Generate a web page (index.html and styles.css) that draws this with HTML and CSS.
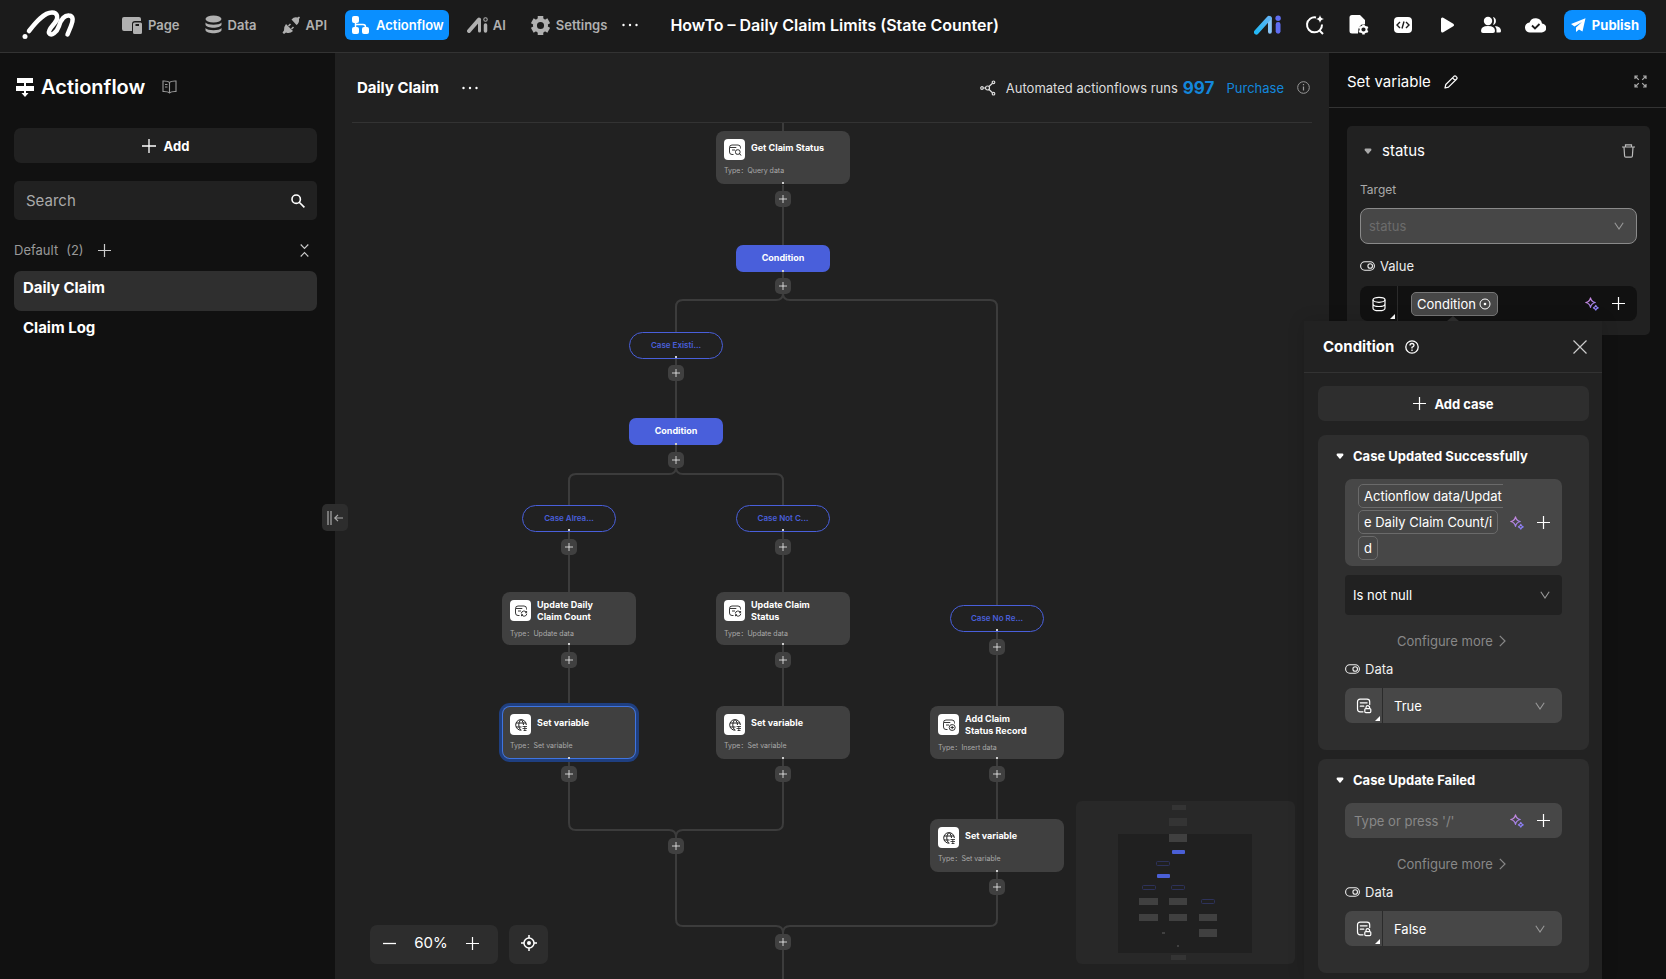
FILE: index.html
```html
<!DOCTYPE html>
<html lang="en">
<head>
    <meta charset="UTF-8">
    <meta name="viewport" content="width=device-width, initial-scale=1.0">
    <title>Actionflow - Daily Claim</title>
    <link rel="stylesheet" href="styles.css">
</head>
<body>
<!-- Shared icons -->
<svg class="sprite" aria-hidden="true">
    <defs>
        <linearGradient id="aiBlue" x1="0" y1="1" x2="1" y2="0">
            <stop offset="0" stop-color="#22b8f5"/>
            <stop offset="1" stop-color="#5fb4f5"/>
        </linearGradient>
        <linearGradient id="sparkGrad" x1="0" y1="0" x2="1" y2="1">
            <stop offset="0" stop-color="#d78ad8"/>
            <stop offset="1" stop-color="#7d7dfa"/>
        </linearGradient>
    </defs>
    <symbol id="plus" viewBox="0 0 14 14"><path d="M7 0v14M0 7h14" fill="none" stroke="currentColor" stroke-width="1.3"/></symbol>
    <symbol id="dots" viewBox="0 0 16 4"><circle cx="1.5" cy="2" r="1.2" fill="currentColor"/><circle cx="8" cy="2" r="1.2" fill="currentColor"/><circle cx="14.5" cy="2" r="1.2" fill="currentColor"/></symbol>
    <symbol id="chevron" viewBox="0 0 10 8"><path d="M.8.8 5 7 9.2.8" fill="none" stroke="currentColor" stroke-width="1.1"/></symbol>
    <symbol id="arrow" viewBox="0 0 7 12"><path d="M.8.8 6 6 .8 11.2" fill="none" stroke="currentColor" stroke-width="1.2"/></symbol>
    <symbol id="caret" viewBox="0 0 8 6"><path d="M1.5.5h5Q8 .8 7.2 2.2L4.6 5.4Q4 6 3.4 5.4L.8 2.2Q0 .8 1.5.5Z" fill="currentColor"/></symbol>
    <symbol id="toggle" viewBox="0 0 15 10"><rect x=".6" y=".8" width="13.8" height="8.4" rx="4.2" fill="none" stroke="currentColor" stroke-width="1.1"/><circle cx="10.2" cy="5" r="2.3" fill="none" stroke="currentColor" stroke-width="1.1"/></symbol>
    <symbol id="spark" viewBox="0 0 14 14"><path d="M5.5.8Q6.3 4.7 10.3 5.5 6.3 6.3 5.5 10.3 4.7 6.3.8 5.5 4.7 4.7 5.5.8ZM10.8 8.4Q11.2 10.3 13.2 10.8 11.2 11.3 10.8 13.2 10.3 11.3 8.4 10.8 10.3 10.3 10.8 8.4Z" fill="none" stroke="url(#sparkGrad)" stroke-width="1.2" stroke-linejoin="round"/></symbol>
    <symbol id="formlock" viewBox="0 0 16 16"><path d="M7 13.8H4.2Q1.5 13.8 1.5 11V3.8Q1.5 1.2 4.2 1.2H11Q13.7 1.2 13.7 3.8V6.5M4.3 4.8h6.8M4.3 8.2h3.5" fill="none" stroke="currentColor" stroke-width="1.2" stroke-linecap="round"/><rect x="8.8" y="10.6" width="6" height="4" rx="1" fill="none" stroke="currentColor" stroke-width="1.2"/><path d="M10 10.5V9.500a1.8 1.8 0 0 1 3.600 0v1" fill="none" stroke="currentColor" stroke-width="1.2"/></symbol>
    <symbol id="record" viewBox="0 0 14 14"><path d="M5.5 11.5H4Q1.5 11.5 1.5 9V4.5Q1.5 2 4 2H10Q12.5 2 12.5 4.5V5.500M1.800 4.500h6.500M4 7h3" fill="none" stroke="currentColor" stroke-width=".9"/></symbol>
    <symbol id="nodeQuery" viewBox="0 0 14 14"><use href="#record"/><rect x="7.5" y="6.8" width="4.500" height="4.500" rx="1.800" fill="none" stroke="currentColor"/><path d="m11.5 10.5 1.5 2" stroke="currentColor"/></symbol>
    <symbol id="nodeUpdate" viewBox="0 0 14 14"><use href="#record"/><path d="M7.300 9.500a2.700 2.700 0 0 1 5-1.200M12.600 7v1.700h-1.500M12.800 9.700a2.700 2.700 0 0 1-5 1.200M7.500 12.200v-1.600h1.400" fill="none" stroke="currentColor" stroke-width=".9"/></symbol>
    <symbol id="nodeInsert" viewBox="0 0 14 14"><use href="#record"/><circle cx="10.2" cy="9.5" r="3" fill="none" stroke="currentColor" stroke-width=".9"/><path d="M10.2 7.8v3.4M8.500 9.500h3.400" stroke="currentColor" stroke-width=".9"/></symbol>
    <symbol id="nodeVar" viewBox="0 0 14 14"><path d="M7.500 12.200A5.300 5.300 0 1 1 12.300 7M2 5h10M2 9h5.500M6.500 1.800Q3 7 6.500 12M7.500 1.800Q9.500 4.200 9.500 7" fill="none" stroke="currentColor"/><path d="M8.500 8.500h4.500M8.500 10.500h4.500M9.500 12.500h3M10.800 8v5" stroke="currentColor" stroke-width=".8"/></symbol>
    <symbol id="db" viewBox="0 0 16 16"><ellipse cx="8" cy="3.8" rx="6" ry="2.5" fill="none" stroke="currentColor" stroke-width="1.2"/><path d="M2 3.8v8.4c0 3.300 12 3.300 12 0V3.800M2 8c0 3.300 12 3.300 12 0" fill="none" stroke="currentColor" stroke-width="1.2"/></symbol>
</svg>

<header class="topbar">
    <a href="#" class="logo" aria-label="Home">
        <svg width="54" height="30" viewBox="0 0 54 30" fill="none" stroke="#fff" stroke-width="4.500" stroke-linecap="round" stroke-linejoin="round">
            <circle cx="3" cy="26.500" r="2.500" fill="#fff" stroke="none"/>
            <path d="M7 21C14 12 22 2.500 30 2.500 36 2.500 36 8 34 11 31 16 26 19 27 23 29 27 35 22 37 16 39 9 43 5 47 5.500 52 6 51 11 49 16L45.500 24.500"/>
        </svg>
    </a>
    <nav class="nav">
        <a href="#" class="nav-item">
            <svg width="20" height="20" viewBox="0 0 20 20" fill="currentColor"><path d="M2 2h15q2 0 2 2v2h-6q-3 0-3 3v7H2q-2 0-2-2V4q0-2 2-2Z"/><path fill-rule="evenodd" d="M12.500 7.500h6Q20 7.500 20 9v8.500q0 1.500-1.500 1.500h-6q-1.500 0-1.500-1.500V9q0-1.500 1.500-1.500ZM13.500 9v2h3.500V9Z"/></svg>
            <span>Page</span>
        </a>
        <a href="#" class="nav-item">
            <svg width="17" height="20" viewBox="0 0 17 20" fill="currentColor"><ellipse cx="8.500" cy="4" rx="8" ry="3.500"/><path d="M.5 7.500c2 3 14 3 16 0v2.300c-1 4-15 4-16 0ZM.5 13c2 3 14 3 16 0v2.300c-1 4-15 4-16 0Z"/></svg>
            <span>Data</span>
        </a>
        <a href="#" class="nav-item">
            <svg width="18" height="20" viewBox="0 0 18 20" fill="currentColor"><path d="m9.500 4.500 5 5.500q3-2 2.500-6l1-1.500-1-1-1.500 1Q12 1.500 9.500 4.500ZM4 9l7 7q-3 3-7 1.500L2 19l-1.500-1.500L2 15.500Q1.500 12 4 9Z"/><path d="m6.500 11 2-2M9.500 14l2-2" stroke="currentColor" stroke-width="1.500"/></svg>
            <span>API</span>
        </a>
        <a href="#" class="nav-item active">
            <svg width="17" height="18" viewBox="0 0 17 18" fill="currentColor"><rect x="0" y="0" width="7" height="7" rx="2"/><rect x="0" y="11" width="7" height="7" rx="2"/><rect x="10" y="11" width="7" height="7" rx="2"/><path d="M3.500 4v10M3.500 8.500H11q2.500 0 2.500 2.500V14" fill="none" stroke="currentColor" stroke-width="1.500"/></svg>
            <span>Actionflow</span>
        </a>
        <a href="#" class="nav-item tight">
            <svg width="21" height="16" viewBox="0 0 21 16" fill="none" stroke="currentColor" stroke-linecap="round"><path d="M2 14 12 2.500" stroke-width="4"/><path d="M12.500 3v11" stroke-width="3"/><path d="M18.500 8v6" stroke-width="3.500"/><circle cx="18.500" cy="2.500" r=".5" stroke-width="3.500"/></svg>
            <span>AI</span>
        </a>
        <a href="#" class="nav-item">
            <svg width="19" height="19" viewBox="0 0 24 24" fill="none" stroke="currentColor"><circle cx="12" cy="12" r="7" stroke-width="5"/><path d="M12 0v4M12 20v4M1.600 6l3.500 2M18.900 16l3.500 2M1.600 18l3.500-2M18.900 8l3.500-2" stroke-width="7"/></svg>
            <span>Settings</span>
        </a>
    </nav>
    <button class="icon-btn nav-more" aria-label="More"><svg width="18" height="4"><use href="#dots"/></svg></button>
    <h1 class="project">HowTo – Daily Claim Limits (State Counter)</h1>
    <div class="tools">
        <button class="icon-btn" aria-label="AI assistant">
            <svg width="27" height="20" viewBox="0 0 28 20" fill="none" stroke-linecap="round"><path d="M16.500 3v14" stroke="#8bc5f5" stroke-width="4"/><path d="M2.500 17.500 15.500 3" stroke="url(#aiBlue)" stroke-width="5"/><path d="M25 9.500v7" stroke="#5f6df2" stroke-width="5"/><circle cx="25" cy="3" r="2.800" fill="#5f6df2"/></svg>
        </button>
        <button class="icon-btn" aria-label="AI search">
            <svg width="20" height="20" viewBox="0 0 20 20" fill="none" stroke="#fff" stroke-width="2"><path d="M11 2.500A7.500 7.500 0 1 0 17 9.500M14 15l4 4"/><path d="M15 0q.5 3.500 4 4-3.500.5-4 4-.5-3.500-4-4 3.500-.5 4-4Z" fill="#fff" stroke="none"/></svg>
        </button>
        <button class="icon-btn" aria-label="File settings">
            <svg width="20" height="20" viewBox="0 0 20 20"><path d="M3 0h8l5 5v4q-7.500 0-7 9.500H3q-2.500 0-2.500-2.500V2.500Q.5 0 3 0Z" fill="#fff"/><path d="M14.500 9.500v10M10.200 12l8.600 5M10.200 17l8.600-5" stroke="#fff" stroke-width="2.500"/><circle cx="14.500" cy="14.500" r="3" fill="#1b1b1b" stroke="#fff" stroke-width="1.800"/></svg>
        </button>
        <button class="icon-btn" aria-label="Code">
            <svg width="20" height="20" viewBox="0 0 20 20"><rect x="1" y="2" width="18" height="16" rx="4" fill="#fff"/><path d="m7 7-3 3 3 3M13 7l3 3-3 3M11 6.500l-2 7" fill="none" stroke="#1b1b1b" stroke-width="1.400"/></svg>
        </button>
        <button class="icon-btn" aria-label="Preview">
            <svg width="20" height="20" viewBox="0 0 20 20"><path d="M5.500 4v12l10-6Z" fill="#fff" stroke="#fff" stroke-width="3" stroke-linejoin="round"/></svg>
        </button>
        <button class="icon-btn" aria-label="Members">
            <svg width="20" height="20" viewBox="0 0 20 20" fill="#fff"><circle cx="7" cy="6" r="4.200"/><path d="M0 16q0-5 7-5t7 5q0 2-2 2H2q-2 0-2-2ZM12 2a4.200 4.200 0 0 1 0 8q2-4 0-8ZM14 11q6 .5 6 5 0 1.500-1.500 1.500h-3q.5-4-1.500-6.500Z"/></svg>
        </button>
        <button class="icon-btn" aria-label="Saved">
            <svg width="21" height="20" viewBox="0 0 21 20"><path d="M5.500 17.500h11a4.500 4.500 0 0 0 .5-9A6.500 6.500 0 0 0 4.500 7.500a5 5 0 0 0 1 10Z" fill="#fff"/><path d="m7 10.500 3 3 4.500-4.500" fill="none" stroke="#1b1b1b" stroke-width="1.800"/></svg>
        </button>
    </div>
    <button class="publish">
        <svg width="15" height="15" viewBox="0 0 15 15" fill="#fff"><path d="M14.500.3 0 6l3.500 2.500L11 4 5 9.500V14l3-2.500 3.500 2Z"/></svg>
        <span>Publish</span>
    </button>
</header>

<div class="workspace">
    <aside class="sidebar">
        <div class="side-title">
            <svg width="18" height="19" viewBox="0 0 18 19" fill="#fff"><path d="M1 0h16v5H1ZM0 8h18v5H0Z"/><path d="M8 5h2v3H8ZM9 19l-3.500-4H8v-2h2v2h2.500Z"/></svg>
            <h2>Actionflow</h2>
            <button class="icon-btn" aria-label="Documentation">
                <svg width="15" height="14" viewBox="0 0 15 14" fill="none" stroke="#999" stroke-width="1.100"><path d="M7.500 2.500Q6 .8 1 1v10.500q5-.2 6.500 1.500Q9 11.300 14 11.500V1Q9 .8 7.500 2.500ZM7.500 2.500V13M3 4.500h2.500M3 7h2.500"/></svg>
            </button>
        </div>
        <button class="add-btn"><svg width="14" height="14"><use href="#plus"/></svg><span>Add</span></button>
        <label class="search">
            <input type="text" placeholder="Search" aria-label="Search">
            <svg width="14" height="14" viewBox="0 0 14 14" fill="none" stroke="#fff" stroke-width="1.600"><circle cx="5.200" cy="5.200" r="4.200"/><path d="m8.200 8.200 5.200 5.200"/></svg>
        </label>
        <div class="group">
            <span>Default</span><span>(2)</span>
            <button class="icon-btn" aria-label="Add to group"><svg width="13" height="13"><use href="#plus"/></svg></button>
            <button class="icon-btn collapse" aria-label="Collapse group">
                <svg width="9" height="13" viewBox="0 0 9 13" fill="none" stroke="currentColor" stroke-width="1.100"><path d="m.7.500 3.800 4 3.800-4M.7 12.500l3.800-4 3.800 4"/></svg>
            </button>
        </div>
        <ul class="flows">
            <li><a href="#" class="flow active">Daily Claim</a></li>
            <li><a href="#" class="flow">Claim Log</a></li>
        </ul>
        <button class="fold" aria-label="Fold sidebar">
            <svg width="16" height="14" viewBox="0 0 16 14" fill="none" stroke="#aaa" stroke-width="1.200"><path d="M1 0v14M4 0v14M16 7H8M11 3.800 7.800 7l3.200 3.200"/></svg>
        </button>
    </aside>

    <main class="editor">
        <div class="editor-head">
            <h2>Daily Claim</h2>
            <button class="icon-btn" aria-label="Flow options"><svg width="18" height="4"><use href="#dots"/></svg></button>
            <div class="usage">
                <svg width="16" height="16" viewBox="0 0 16 16" fill="none" stroke="#ddd" stroke-width="1.200"><circle cx="2" cy="8" r="1.300"/><circle cx="7.500" cy="8" r="2"/><circle cx="13.500" cy="2.300" r="1.300"/><circle cx="13.500" cy="13.700" r="1.300"/><path d="M3.300 8h2.200M9 6.500l3.500-3.300M9 9.500l3.500 3.300"/></svg>
                <span>Automated actionflows runs</span>
                <strong>997</strong>
                <a href="#">Purchase</a>
                <svg width="13" height="13" viewBox="0 0 13 13" fill="none" stroke="#999"><circle cx="6.500" cy="6.500" r="5.800"/><path d="M6.500 5.500v4M6.500 3v1.300" stroke-width="1.200"/></svg>
            </div>
        </div>

        <div class="canvas">
            <svg class="edges" width="760" height="860">
                <path d="M448 0V8M448 62V122M448 149V170Q448 177 441 177H348Q341 177 341 184V209M448 170Q448 177 455 177H655Q662 177 662 184V482M341 236V295M341 322V344Q341 351 334 351H241Q234 351 234 358V382M341 344Q341 351 348 351H441Q448 351 448 358V382M234 409V469M448 409V469M234 522V583M448 522V583M234 636V700Q234 707 241 707H334Q341 707 341 714V796Q341 803 348 803H441Q448 803 448 810V860M448 636V700Q448 707 441 707H348Q341 707 341 714M662 509V583M662 636V696M662 749V796Q662 803 655 803H455Q448 803 448 810"/>
            </svg>

            <div class="node" style="left: 381px; top: 8px">
                <div class="node-head"><i><svg width="14" height="14"><use href="#nodeQuery"/></svg></i><b>Get Claim Status</b></div>
                <p><span>Type：</span>Query data</p>
            </div>
            <button class="insert" style="left: 440px; top: 68px" aria-label="Insert node"><svg width="8" height="8"><use href="#plus"/></svg></button>
            <div class="cond" style="left: 401px; top: 122px">Condition</div>
            <button class="insert" style="left: 440px; top: 155px" aria-label="Insert node"><svg width="8" height="8"><use href="#plus"/></svg></button>
            <div class="case" style="left: 294px; top: 209px">Case Existi...</div>
            <button class="insert" style="left: 333px; top: 242px" aria-label="Insert node"><svg width="8" height="8"><use href="#plus"/></svg></button>
            <div class="cond" style="left: 294px; top: 295px">Condition</div>
            <button class="insert" style="left: 333px; top: 329px" aria-label="Insert node"><svg width="8" height="8"><use href="#plus"/></svg></button>
            <div class="case" style="left: 187px; top: 382px">Case Alrea...</div>
            <button class="insert" style="left: 226px; top: 416px" aria-label="Insert node"><svg width="8" height="8"><use href="#plus"/></svg></button>
            <div class="case" style="left: 401px; top: 382px">Case Not C...</div>
            <button class="insert" style="left: 440px; top: 416px" aria-label="Insert node"><svg width="8" height="8"><use href="#plus"/></svg></button>
            <div class="case" style="left: 615px; top: 482px">Case No Re...</div>
            <button class="insert" style="left: 654px; top: 516px" aria-label="Insert node"><svg width="8" height="8"><use href="#plus"/></svg></button>

            <div class="node" style="left: 167px; top: 469px">
                <div class="node-head"><i><svg width="14" height="14"><use href="#nodeUpdate"/></svg></i><b>Update Daily<br>Claim Count</b></div>
                <p><span>Type：</span>Update data</p>
            </div>
            <button class="insert" style="left: 226px; top: 529px" aria-label="Insert node"><svg width="8" height="8"><use href="#plus"/></svg></button>
            <div class="node" style="left: 381px; top: 469px">
                <div class="node-head"><i><svg width="14" height="14"><use href="#nodeUpdate"/></svg></i><b>Update Claim<br>Status</b></div>
                <p><span>Type：</span>Update data</p>
            </div>
            <button class="insert" style="left: 440px; top: 529px" aria-label="Insert node"><svg width="8" height="8"><use href="#plus"/></svg></button>

            <div class="node selected" style="left: 167px; top: 583px">
                <div class="node-head"><i><svg width="14" height="14"><use href="#nodeVar"/></svg></i><b>Set variable</b></div>
                <p><span>Type：</span>Set variable</p>
            </div>
            <button class="insert" style="left: 226px; top: 643px" aria-label="Insert node"><svg width="8" height="8"><use href="#plus"/></svg></button>
            <div class="node" style="left: 381px; top: 583px">
                <div class="node-head"><i><svg width="14" height="14"><use href="#nodeVar"/></svg></i><b>Set variable</b></div>
                <p><span>Type：</span>Set variable</p>
            </div>
            <button class="insert" style="left: 440px; top: 643px" aria-label="Insert node"><svg width="8" height="8"><use href="#plus"/></svg></button>
            <div class="node" style="left: 595px; top: 583px">
                <div class="node-head"><i><svg width="14" height="14"><use href="#nodeInsert"/></svg></i><b>Add Claim<br>Status Record</b></div>
                <p><span>Type：</span>Insert data</p>
            </div>
            <button class="insert" style="left: 654px; top: 643px" aria-label="Insert node"><svg width="8" height="8"><use href="#plus"/></svg></button>
            <div class="node" style="left: 595px; top: 696px">
                <div class="node-head"><i><svg width="14" height="14"><use href="#nodeVar"/></svg></i><b>Set variable</b></div>
                <p><span>Type：</span>Set variable</p>
            </div>
            <button class="insert" style="left: 654px; top: 756px" aria-label="Insert node"><svg width="8" height="8"><use href="#plus"/></svg></button>
            <button class="insert" style="left: 333px; top: 715px" aria-label="Insert node"><svg width="8" height="8"><use href="#plus"/></svg></button>
            <button class="insert" style="left: 440px; top: 811px" aria-label="Insert node"><svg width="8" height="8"><use href="#plus"/></svg></button>

            <div class="zoom">
                <div class="zoom-box">
                    <button class="icon-btn" aria-label="Zoom out"><svg width="13" height="13" viewBox="0 0 13 13"><path d="M0 6.500h13" stroke="#fff" stroke-width="1.300"/></svg></button>
                    <span>60%</span>
                    <button class="icon-btn" aria-label="Zoom in"><svg width="13" height="13"><use href="#plus"/></svg></button>
                </div>
                <button class="locate" aria-label="Center view">
                    <svg width="16" height="16" viewBox="0 0 16 16" fill="none" stroke="#fff" stroke-width="1.500"><circle cx="8" cy="8" r="5"/><circle cx="8" cy="8" r="2" fill="#fff" stroke="none"/><path d="M8 0v3M8 13v3M0 8h3M13 8h3"/></svg>
                </button>
            </div>

            <svg class="minimap" width="219" height="163" viewBox="0 0 219 163">
                <rect x="42" y="33" width="134" height="119" fill="#202020"/>
                <g fill="#343434"><rect x="96" y="4" width="14" height="5"/><rect x="93" y="17" width="18" height="8"/><rect x="95" y="154" width="15" height="5"/></g>
                <g fill="#404040"><rect x="93" y="33" width="18" height="8"/><rect x="63" y="97" width="19" height="7"/><rect x="93" y="97" width="18" height="7"/><rect x="63" y="113" width="19" height="7"/><rect x="93" y="113" width="18" height="7"/><rect x="123" y="113" width="18" height="7"/><rect x="123" y="128" width="18" height="8"/><rect x="86" y="131" width="3" height="2"/><rect x="101" y="144" width="2" height="2"/></g>
                <g fill="#4a5fd6"><rect x="96" y="49" width="13" height="4" rx="1"/><rect x="81" y="73" width="13" height="4" rx="1"/></g>
                <g fill="none" stroke="#2d325a"><rect x="80.500" y="60.500" width="13" height="4" rx="1"/><rect x="66.500" y="84.500" width="13" height="4" rx="1"/><rect x="95.500" y="84.500" width="13" height="4" rx="1"/><rect x="125.500" y="98.500" width="13" height="4" rx="1"/></g>
            </svg>
        </div>
    </main>

    <aside class="inspector">
        <div class="inspector-head">
            <h2>Set variable</h2>
            <button class="icon-btn" aria-label="Rename"><svg width="14" height="14" viewBox="0 0 14 14" fill="none" stroke="#fff" stroke-width="1.200" stroke-linejoin="round"><path d="m1 13 .8-3.500L10 1.300q1-.8 1.900 0l.8.8q.8.900 0 1.900L4.500 12.200ZM8.500 2.800l2.700 2.700"/></svg></button>
            <button class="icon-btn expand" aria-label="Expand"><svg width="13" height="13" viewBox="0 0 13 13" fill="none" stroke="#aaa" stroke-width="1.200"><path d="M1 4V1h3M9 1h3v3M12 9v3H9M4 12H1V9M1 1l3.800 3.800M12 1 8.200 4.800M12 12 8.200 8.200M1 12l3.800-3.800"/></svg></button>
        </div>
        <section class="var-card">
            <div class="var-title">
                <svg class="dim" width="8" height="6"><use href="#caret"/></svg>
                <h3>status</h3>
                <button class="icon-btn" aria-label="Delete"><svg width="13" height="14" viewBox="0 0 13 14" fill="none" stroke="#bbb" stroke-width="1.200"><path d="M0 3h13M3.500 3V.8h6V3M2 3l.6 9q.1 1.200 1.200 1.200h5.400q1.100 0 1.200-1.200l.6-9"/></svg></button>
            </div>
            <label class="target-label" for="target">Target</label>
            <div class="select target">
                <select id="target" disabled><option>status</option></select>
                <svg width="10" height="8"><use href="#chevron"/></svg>
            </div>
            <div class="kind value-kind"><svg width="15" height="10"><use href="#toggle"/></svg><span>Value</span></div>
            <div class="value-field">
                <button class="source" aria-label="Value source"><svg width="16" height="16"><use href="#db"/></svg></button>
                <div class="value-body">
                    <button class="chip">Condition <svg width="12" height="12" viewBox="0 0 12 12" fill="none" stroke="#fff"><circle cx="6" cy="6" r="5"/><circle cx="6" cy="6" r="1.300" fill="#fff" stroke="none"/></svg></button>
                </div>
                <button class="icon-btn" aria-label="Generate"><svg width="14" height="14"><use href="#spark"/></svg></button>
                <button class="icon-btn" aria-label="Insert value"><svg width="13" height="13"><use href="#plus"/></svg></button>
            </div>
        </section>

        <!-- Condition editor, opened from the value chip -->
        <section class="popover">
            <div class="popover-head">
                <h3>Condition</h3>
                <button class="icon-btn" aria-label="Help"><svg width="14" height="14" viewBox="0 0 14 14" fill="none" stroke="#fff" stroke-width="1.300"><circle cx="7" cy="7" r="6.200"/><path d="M5 5.500Q5 3.500 7 3.500T9 5.500Q9 6.500 7 7.300V8.500M7 9.500V11"/></svg></button>
                <button class="icon-btn close" aria-label="Close"><svg width="14" height="14" viewBox="0 0 14 14"><path d="m.5.500 13 13M13.500.500l-13 13" stroke="#ccc" stroke-width="1.200"/></svg></button>
            </div>
            <div class="popover-body">
                <button class="add-btn add-case"><svg width="13" height="13"><use href="#plus"/></svg><span>Add case</span></button>

                <div class="case-card">
                    <div class="case-title"><svg width="8" height="6"><use href="#caret"/></svg><h4>Case Updated Successfully</h4></div>
                    <div class="expr">
                        <div class="expr-text"><span class="token">Actionflow data/Updat<br>e Daily Claim Count/i<br>d</span></div>
                        <button class="icon-btn" aria-label="Generate"><svg width="14" height="14"><use href="#spark"/></svg></button>
                        <button class="icon-btn" aria-label="Insert value"><svg width="13" height="13"><use href="#plus"/></svg></button>
                    </div>
                    <div class="select operator">
                        <select aria-label="Operator"><option>Is not null</option><option>Is null</option></select>
                        <svg width="10" height="8"><use href="#chevron"/></svg>
                    </div>
                    <button class="more">Configure more <svg width="7" height="12"><use href="#arrow"/></svg></button>
                    <div class="kind"><svg width="15" height="10"><use href="#toggle"/></svg><label for="data1">Data</label></div>
                    <div class="data-field">
                        <button class="source" aria-label="Data source"><svg width="16" height="16"><use href="#formlock"/></svg></button>
                        <div class="select">
                            <select id="data1"><option>True</option><option>False</option></select>
                            <svg width="10" height="8"><use href="#chevron"/></svg>
                        </div>
                    </div>
                </div>

                <div class="case-card">
                    <div class="case-title"><svg width="8" height="6"><use href="#caret"/></svg><h4>Case Update Failed</h4></div>
                    <div class="expr">
                        <input type="text" placeholder="Type or press '/'" aria-label="Case expression">
                        <button class="icon-btn" aria-label="Generate"><svg width="14" height="14"><use href="#spark"/></svg></button>
                        <button class="icon-btn" aria-label="Insert value"><svg width="13" height="13"><use href="#plus"/></svg></button>
                    </div>
                    <button class="more">Configure more <svg width="7" height="12"><use href="#arrow"/></svg></button>
                    <div class="kind"><svg width="15" height="10"><use href="#toggle"/></svg><label for="data2">Data</label></div>
                    <div class="data-field">
                        <button class="source" aria-label="Data source"><svg width="16" height="16"><use href="#formlock"/></svg></button>
                        <div class="select">
                            <select id="data2"><option>False</option><option>True</option></select>
                            <svg width="10" height="8"><use href="#chevron"/></svg>
                        </div>
                    </div>
                </div>
            </div>
        </section>
    </aside>
</div>
</body>
</html>
```

FILE: styles.css
```css
* {
    box-sizing: border-box;
}

body {
    margin: 0;
    height: 100vh;
    display: flex;
    flex-direction: column;
    overflow: hidden;
    background-color: #111;
    color: #fff;
    font-family: Inter, "Noto Sans CJK SC", sans-serif;
    font-size: 13px;
    line-height: 20px;
}

h1, h2, h3, h4, p, ul {
    margin: 0;
    padding: 0;
}

a {
    color: inherit;
    text-decoration: none;
}

button, input, select {
    font: inherit;
    color: inherit;
    border: none;
    margin: 0;
    padding: 0;
    background: none;
}

button {
    cursor: pointer;
}

svg {
    display: block;
    flex: none;
}

.sprite {
    position: absolute;
    width: 0;
    height: 0;
}

.icon-btn {
    display: flex;
    align-items: center;
    justify-content: center;
    flex: none;
}

/* Top bar */
.topbar {
    display: flex;
    align-items: center;
    height: 53px;
    flex: none;
    padding: 0 20px 2px 22px;
    background-color: #1b1b1b;
    border-bottom: 1px solid #333;
}

.nav {
    display: flex;
    gap: 11px;
    margin-left: 39px;
}

.nav-item {
    display: flex;
    align-items: center;
    gap: 6px;
    height: 30px;
    padding: 0 7px;
    border-radius: 6px;
    color: #b0b0b0;
    font-weight: 600;
}

.nav-item.tight {
    gap: 5px;
}

.nav-item.active {
    gap: 7px;
    padding: 0 5px 0 7px;
    background-color: #0a8fff;
    color: #fff;
}

.nav-more {
    margin-left: 7px;
}

.project {
    margin-left: 31px;
    font-size: 16px;
    font-weight: 600;
    white-space: nowrap;
}

.tools {
    display: flex;
    align-items: center;
    gap: 24px;
    margin-left: auto;
}

.publish {
    display: flex;
    align-items: center;
    gap: 6px;
    height: 30px;
    margin-left: 18px;
    padding: 0 7px;
    border-radius: 8px;
    background-color: #0a8fff;
    font-weight: 700;
}

.workspace {
    display: flex;
    flex: 1;
    min-height: 0;
}

/* Left sidebar */
.sidebar {
    position: relative;
    width: 335px;
    flex: none;
    padding: 19px 18px 0 14px;
    background-color: #111;
}

.side-title {
    display: flex;
    align-items: center;
    gap: 7px;
    height: 30px;
    padding-left: 2px;
}

.side-title h2 {
    margin-right: 10px;
    font-size: 20px;
    font-weight: 600;
}

.add-btn {
    display: flex;
    align-items: center;
    justify-content: center;
    gap: 8px;
    width: 100%;
    height: 35px;
    margin-top: 26px;
    border-radius: 7px;
    background-color: #212121;
    font-weight: 700;
}

.search {
    display: flex;
    align-items: center;
    height: 39px;
    margin-top: 18px;
    padding: 0 12px;
    border-radius: 5px;
    background-color: #212121;
}

.search input {
    flex: 1;
    min-width: 0;
    font-size: 15px;
}

.search input::placeholder {
    color: #aaa;
    opacity: 1;
}

.group {
    display: flex;
    align-items: center;
    gap: 8px;
    height: 20px;
    margin-top: 20px;
    color: #999;
}

.group .icon-btn {
    margin-left: 6px;
    color: #ccc;
}

.group .collapse {
    margin-left: auto;
    margin-right: 8px;
}

.flows {
    margin-top: 11px;
    list-style: none;
}

.flow {
    display: block;
    height: 40px;
    padding: 7px 9px;
    border-radius: 7px;
    font-size: 15px;
    font-weight: 700;
}

.flow.active {
    background-color: #2f2f2f;
}

.fold {
    position: absolute;
    top: 451px;
    right: -13px;
    z-index: 2;
    display: flex;
    align-items: center;
    justify-content: center;
    width: 26px;
    height: 27px;
    border-radius: 5px;
    background-color: #2d2d2d;
}

/* Flow editor */
.editor {
    display: flex;
    flex-direction: column;
    flex: 1;
    min-width: 0;
    background-color: #212121;
}

.editor-head {
    display: flex;
    align-items: center;
    gap: 22px;
    height: 70px;
    flex: none;
    margin: 0 17px;
    padding: 0 2px 0 5px;
    border-bottom: 1px solid #333;
}

.editor-head h2 {
    font-size: 15px;
    font-weight: 700;
}

.usage {
    display: flex;
    align-items: center;
    margin-left: auto;
    color: #ddd;
}

.usage span {
    margin-left: 10px;
}

.usage strong {
    margin: 0 12px 0 5px;
    color: #1387dc;
    font-size: 17px;
    font-weight: 700;
}

.usage a {
    margin-right: 13px;
    color: #1387dc;
}

.canvas {
    position: relative;
    flex: 1;
    overflow: hidden;
}

.edges {
    position: absolute;
    top: 0;
    left: 0;
}

.edges path {
    fill: none;
    stroke: #3c3c3c;
    stroke-width: 2;
}

.node, .cond, .case {
    position: absolute;
}

/* Outgoing handle */
.node::after, .cond::after, .case::after {
    content: "";
    position: absolute;
    bottom: 0;
    left: 50%;
    width: 2px;
    height: 2px;
    margin-left: -1px;
    background-color: #ccc;
}

.node {
    width: 134px;
    height: 53px;
    padding: 7px 8px;
    border-radius: 8px;
    background-color: #404040;
}

.node.selected {
    box-shadow: inset 0 0 0 1px #3f74e0, 0 0 0 3px #1f3f80;
}

.node-head {
    display: flex;
    align-items: flex-start;
    gap: 6px;
}

.node-head i {
    display: flex;
    align-items: center;
    justify-content: center;
    width: 21px;
    height: 21px;
    margin-top: 1px;
    border-radius: 4px;
    background-color: #fff;
    color: #222;
}

.node-head b {
    display: flex;
    align-items: center;
    min-height: 20px;
    font-size: 9px;
    font-weight: 700;
    line-height: 12px;
}

.node p {
    margin-top: 5px;
    color: #aaa;
    font-size: 7px;
    line-height: 12px;
}

.cond, .case {
    width: 94px;
    height: 27px;
    text-align: center;
    font-size: 9px;
    font-weight: 700;
    line-height: 26px;
}

.cond {
    border-radius: 7px;
    background-color: #495fdb;
}

.case {
    border: 1px solid #495fdb;
    border-radius: 14px;
    background-color: #212121;
    color: #495fdb;
    font-size: 8px;
    font-weight: 600;
    line-height: 24px;
}

.insert {
    position: absolute;
    display: flex;
    align-items: center;
    justify-content: center;
    width: 16px;
    height: 16px;
    border-radius: 5px;
    background-color: #404040;
}

.zoom {
    position: absolute;
    bottom: 15px;
    left: 35px;
    display: flex;
    gap: 11px;
}

.zoom-box, .locate {
    display: flex;
    align-items: center;
    height: 39px;
    padding-bottom: 3px;
    border-radius: 7px;
    background-color: #2d2d2d;
}

.zoom-box {
    justify-content: space-between;
    width: 128px;
    padding-left: 13px;
    padding-right: 19px;
    font-size: 15px;
}

.locate {
    justify-content: center;
    width: 39px;
}

.minimap {
    position: absolute;
    right: 34px;
    bottom: 15px;
    border-radius: 6px;
    background-color: #282828;
}

/* Right inspector */
.inspector {
    position: relative;
    width: 337px;
    flex: none;
    background-color: #111;
}

.inspector-head {
    display: flex;
    align-items: center;
    gap: 13px;
    height: 55px;
    padding: 3px 19px 0 18px;
    border-bottom: 1px solid #333;
}

.inspector-head h2 {
    font-size: 15px;
    font-weight: 400;
}

.expand {
    margin-left: auto;
}

.var-card {
    margin: 18px 16px 0 18px;
    padding: 15px 13px 14px;
    border-radius: 5px;
    background-color: #212121;
}

.var-title {
    display: flex;
    align-items: center;
    gap: 10px;
    padding: 0 2px 0 4px;
}

.var-title h3 {
    flex: 1;
    font-size: 15px;
    font-weight: 400;
}

.dim {
    color: #aaa;
}

.target-label {
    display: block;
    margin: 19px 0 8px;
    color: #aaa;
    font-size: 12px;
}

.select {
    position: relative;
}

.select select {
    display: block;
    width: 100%;
    height: 100%;
    appearance: none;
    opacity: 1;
}

.select option {
    background-color: #333;
}

.select svg {
    position: absolute;
    top: 50%;
    right: 12px;
    margin-top: -4px;
    color: #999;
    pointer-events: none;
}

.target {
    height: 36px;
    border: 1px solid #8a8a8a;
    border-radius: 8px;
    background-color: #474747;
}

.target select {
    padding-left: 8px;
    color: #6c6c6c;
}

.kind {
    display: flex;
    align-items: center;
    gap: 5px;
    color: #eee;
}

.value-kind {
    margin: 12px 0 10px;
}

.value-field {
    display: flex;
    align-items: center;
    gap: 13px;
    height: 35px;
    padding-right: 12px;
    border-radius: 8px;
    background-color: #111;
}

.source {
    position: relative;
    display: flex;
    align-items: center;
    justify-content: center;
    width: 38px;
    height: 100%;
    flex: none;
    border-right: 1px solid #2b2b2b;
}

/* Corner mark showing the source can be switched */
.source::after {
    content: "";
    position: absolute;
    right: 2px;
    bottom: 2px;
    border-left: 5px solid transparent;
    border-bottom: 5px solid #fff;
}

.value-body {
    flex: 1;
}

.chip {
    display: flex;
    align-items: center;
    gap: 3px;
    height: 24px;
    padding: 0 6px 0 5px;
    border: 1px solid #777;
    border-radius: 5px;
    background-color: #474747;
}

/* Condition popover */
.popover {
    position: absolute;
    top: 268px;
    right: 64px;
    bottom: 0;
    width: 298px;
    background-color: #222;
    box-shadow: 0 0 16px rgba(0, 0, 0, 0.15);
}

.popover::before {
    content: "";
    position: absolute;
    top: -5px;
    left: 143px;
    border: 6px solid transparent;
    border-top: none;
    border-bottom: 5px solid #2b2b2b;
}

.popover-head {
    display: flex;
    align-items: center;
    gap: 11px;
    height: 52px;
    padding: 0 15px 0 19px;
    border-bottom: 1px solid #333;
}

.popover-head h3 {
    font-size: 15px;
    font-weight: 700;
}

.close {
    margin-left: auto;
}

.popover-body {
    padding: 13px 13px 6px 14px;
}

.add-case {
    margin: 0 0 14px;
    background-color: #2e2e2e;
}

.case-card {
    margin-bottom: 9px;
    padding: 11px 27px 27px;
    border-radius: 8px;
    background-color: #2e2e2e;
}

.case-title {
    display: flex;
    align-items: center;
    gap: 9px;
    margin: 0 -20px 13px -9px;
}

.case-title h4 {
    font-size: 13px;
    font-weight: 700;
    white-space: nowrap;
}

.expr {
    display: flex;
    align-items: center;
    gap: 13px;
    min-height: 35px;
    padding-right: 12px;
    border-radius: 7px;
    background-color: #474747;
}

.expr input {
    flex: 1;
    min-width: 0;
    padding-left: 9px;
}

.expr input::placeholder {
    color: #888;
    opacity: 1;
}

.expr-text {
    flex: 1;
    min-width: 0;
    margin-right: -6px;
    padding: 4px 0 5px 13px;
    overflow: hidden;
    white-space: nowrap;
    line-height: 26px;
}

.token {
    padding: 3px 5px;
    border: 1px solid #6a6a6a;
    border-radius: 5px;
    -webkit-box-decoration-break: clone;
    box-decoration-break: clone;
}

.operator {
    height: 40px;
    margin-top: 9px;
    border-radius: 4px;
    background-color: #212121;
}

.operator select {
    padding-left: 8px;
}

.more {
    display: flex;
    align-items: center;
    gap: 6px;
    margin: 16px 0 8px 52px;
    color: #888;
}

.data-field {
    display: flex;
    height: 35px;
    margin-top: 9px;
    border-radius: 7px;
    background-color: #474747;
}

.data-field .select {
    flex: 1;
}

.data-field .select svg {
    right: 17px;
}

.data-field select {
    padding-left: 11px;
}
```
